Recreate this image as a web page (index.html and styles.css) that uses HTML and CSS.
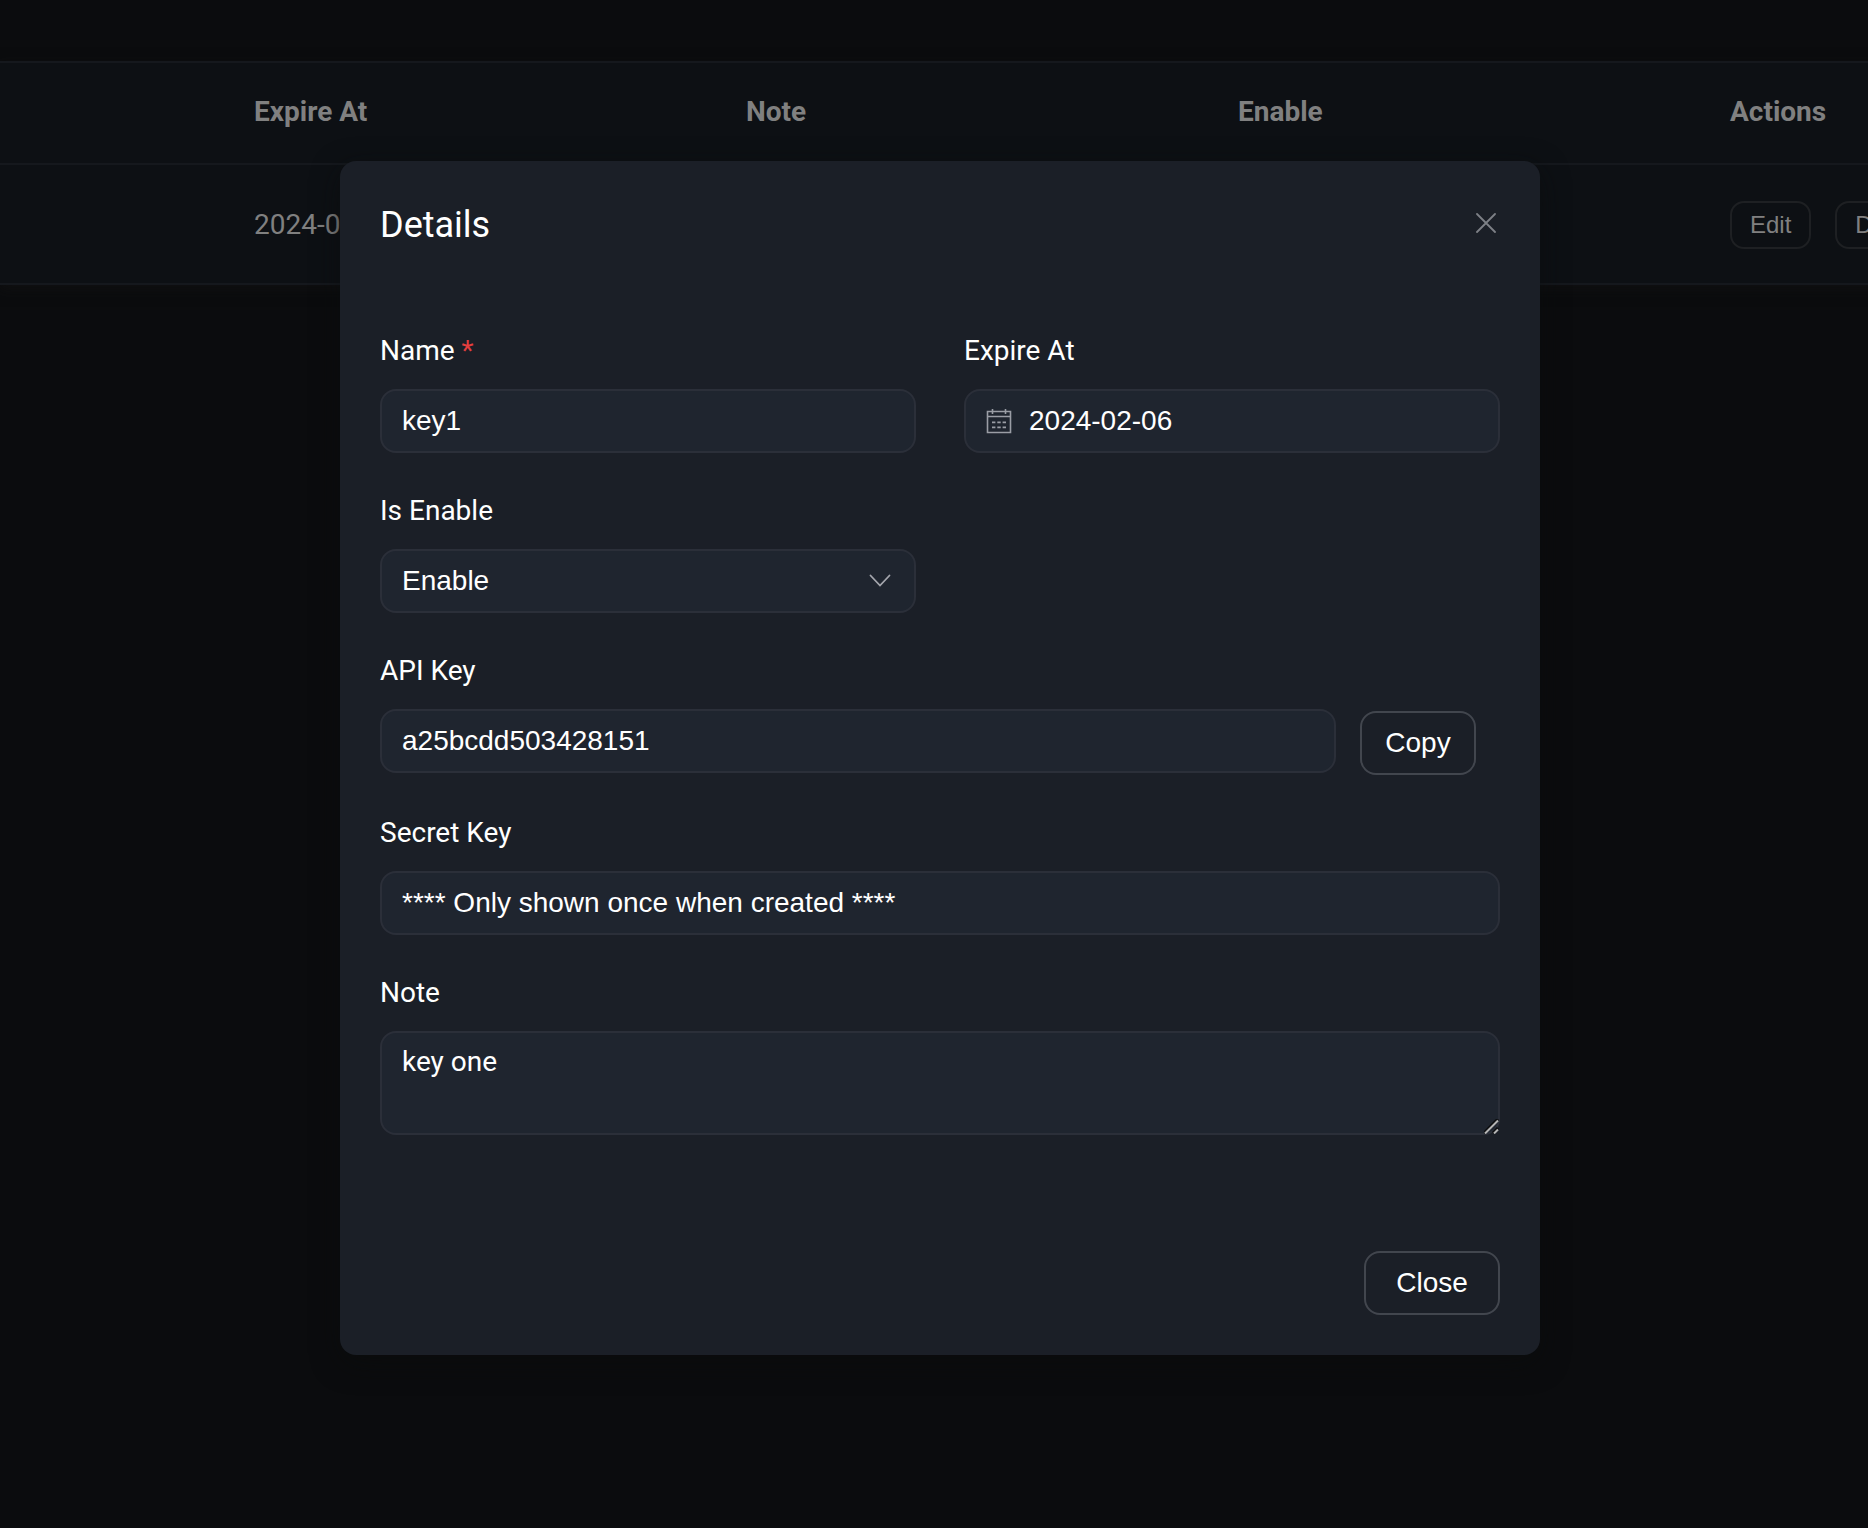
FILE: index.html
```html
<!DOCTYPE html>
<html lang="en">
<head>
<meta charset="utf-8">
<title>API Keys</title>
<link rel="stylesheet" href="styles.css">
</head>
<body>
<main class="page">
  <table class="keys">
    <colgroup><col class="col-lead"><col class="col"><col class="col"><col class="col"><col class="col"></colgroup>
    <thead>
      <tr><th></th><th>Expire At</th><th>Note</th><th>Enable</th><th>Actions</th></tr>
    </thead>
    <tbody>
      <tr>
        <td></td><td>2024-02-06</td><td></td><td></td>
        <td><div class="actions"><button class="btn-small" type="button">Edit</button><button class="btn-small" type="button">Delete</button></div></td>
      </tr>
    </tbody>
  </table>
</main>
<div class="overlay">
  <form class="modal" role="dialog" aria-labelledby="modal-title">
    <header class="modal-head">
      <h1 class="modal-title" id="modal-title">Details</h1>
      <button class="modal-x" type="button" aria-label="Close dialog">
        <svg width="20" height="20" viewBox="0 0 20 20" fill="none" stroke="currentColor" stroke-width="1.8" stroke-linecap="round"><path d="M1 1l18 18M19 1L1 19"/></svg>
      </button>
    </header>
    <div class="fields">
      <div class="pair">
        <div class="field">
          <label for="name">Name <span class="required">*</span></label>
          <input class="control" id="name" type="text" value="key1">
        </div>
        <div class="field">
          <label for="expire">Expire At</label>
          <div class="control date">
            <svg width="26" height="26" viewBox="0 0 26 26" fill="none" stroke="currentColor" stroke-width="1.6"><path d="M1.500 3.500h23v21h-23zM1.500 8.500h23M6.500 1v5M19.500 1v5"/><path d="M6 14.300h14M6 19.300h14" stroke-width="1.8" stroke-dasharray="3.400 1.900"/></svg>
            <input id="expire" type="text" value="2024-02-06">
          </div>
        </div>
      </div>
      <div class="pair">
        <div class="field">
          <label for="enable">Is Enable</label>
          <div class="select">
            <select class="control" id="enable"><option>Enable</option><option>Disable</option></select>
            <svg class="chevron" width="22" height="13" viewBox="0 0 22 13" fill="none" stroke="currentColor" stroke-width="1.8" stroke-linecap="round"><path d="M1.500 1.500L11 11.500l9.500-10"/></svg>
          </div>
        </div>
      </div>
      <div class="field">
        <label for="api">API Key</label>
        <div class="with-button">
          <input class="control" id="api" type="text" value="a25bcdd503428151">
          <button class="btn btn-copy" type="button">Copy</button>
        </div>
      </div>
      <div class="field">
        <label for="secret">Secret Key</label>
        <input class="control" id="secret" type="text" value="**** Only shown once when created ****">
      </div>
      <div class="field">
        <label for="note">Note</label>
        <div class="note-box">
          <textarea class="control note" id="note">key one</textarea>
          <svg class="grip" width="15" height="15" viewBox="0 0 15 15" fill="none"><path d="M0 14L14 0M9 14l5-5" stroke="#0b0c0e" stroke-width="3"/><path d="M1 14.500L14 1.500M10 14.500l4-4" stroke="#b4b4b4" stroke-width="2"/></svg>
        </div>
      </div>
    </div>
    <footer class="modal-foot"><button class="btn btn-close" type="button">Close</button></footer>
  </form>
</div>
</body>
</html>
```
FILE: styles.css
```css
* { box-sizing: border-box; }

body {
  margin: 0;
  min-height: 100vh;
  overflow: hidden;
  background: #0b0c0e;
  color: #fff;
  font: 28px/42px Roboto, sans-serif;
}

button, input, select, textarea { margin: 0; color: inherit; font: inherit; }

.page { padding: 61px 0 40px; overflow: hidden; }

.keys {
  width: calc(100% + 330px);
  table-layout: fixed;
  border-collapse: separate;
  border-spacing: 0;
  border-top: 2px solid #15181d;
  background: #0d1014;
  color: #808080;
  text-align: left;
  box-shadow: 0 4px 12px rgba(20, 20, 20, .5);
}
.col-lead { width: 230px; }
.keys th, .keys td { padding: 0 24px; border-bottom: 2px solid #15181d; }
.keys th { height: 102px; padding-bottom: 2px; font-weight: 700; }
.keys td { height: 120px; padding-top: 2px; }

.actions { display: flex; gap: 24px; }
.btn-small {
  height: 48px;
  padding: 0 18px;
  border: 2px solid #1e2023;
  border-radius: 14px;
  background: none;
  font: 24px/44px "Liberation Sans", Arial, sans-serif;
}

.overlay {
  position: absolute;
  inset: 0;
  display: flex;
  align-items: flex-start;
  justify-content: center;
  padding: 161px 0 0 12px;
}
.modal {
  width: 1200px;
  max-width: 100%;
  padding: 40px;
  border-radius: 16px;
  background: #1b1f27;
  box-shadow: 0 8px 28px rgba(10, 12, 11, .6);
}
.modal-head { display: flex; align-items: flex-start; justify-content: space-between; padding-bottom: 81px; }
.modal-title { margin: 0; font-size: 36px; font-weight: 400; line-height: 48px; }
.modal-x { display: flex; padding: 12px 4px; border: 0; background: none; color: #7d8086; }

.fields { display: flex; flex-direction: column; gap: 37px; }
.pair { display: grid; grid-template-columns: 1fr 1fr; gap: 48px; }
.field { display: flex; flex-direction: column; gap: 17px; min-width: 0; }
.required { color: #e53e3e; }

.control {
  display: block;
  width: 100%;
  height: 64px;
  padding: 0 20px;
  border: 2px solid #2b2f39;
  border-radius: 16px;
  background: #1f252f;
  font: 28px/40px "Liberation Sans", Arial, sans-serif;
  outline: none;
}
.date { display: flex; align-items: center; gap: 17px; color: #9a9da5; }
.date svg { flex: none; }
.date input { flex: 1; min-width: 0; padding: 0; border: 0; background: none; color: #fff; outline: none; }

.select { position: relative; }
.select .control { appearance: none; }
.chevron { position: absolute; top: 25px; right: 25px; color: #a4a6ad; pointer-events: none; }

.with-button { display: flex; align-items: flex-start; gap: 24px; padding-right: 24px; }
.with-button .control { flex: 1; min-width: 0; }

.btn {
  height: 64px;
  border: 2px solid #42464e;
  border-radius: 16px;
  background: none;
  font: 28px/56px "Liberation Sans", Arial, sans-serif;
}
.btn-copy { width: 116px; margin-top: 2px; }
.btn-close { width: 136px; }

.note-box { position: relative; }
.note { height: 104px; padding-top: 9px; font-family: Roboto, sans-serif; resize: none; }
.grip { position: absolute; right: 1px; bottom: 1px; pointer-events: none; }

.modal-foot { display: flex; justify-content: flex-end; padding-top: 116px; }
```
